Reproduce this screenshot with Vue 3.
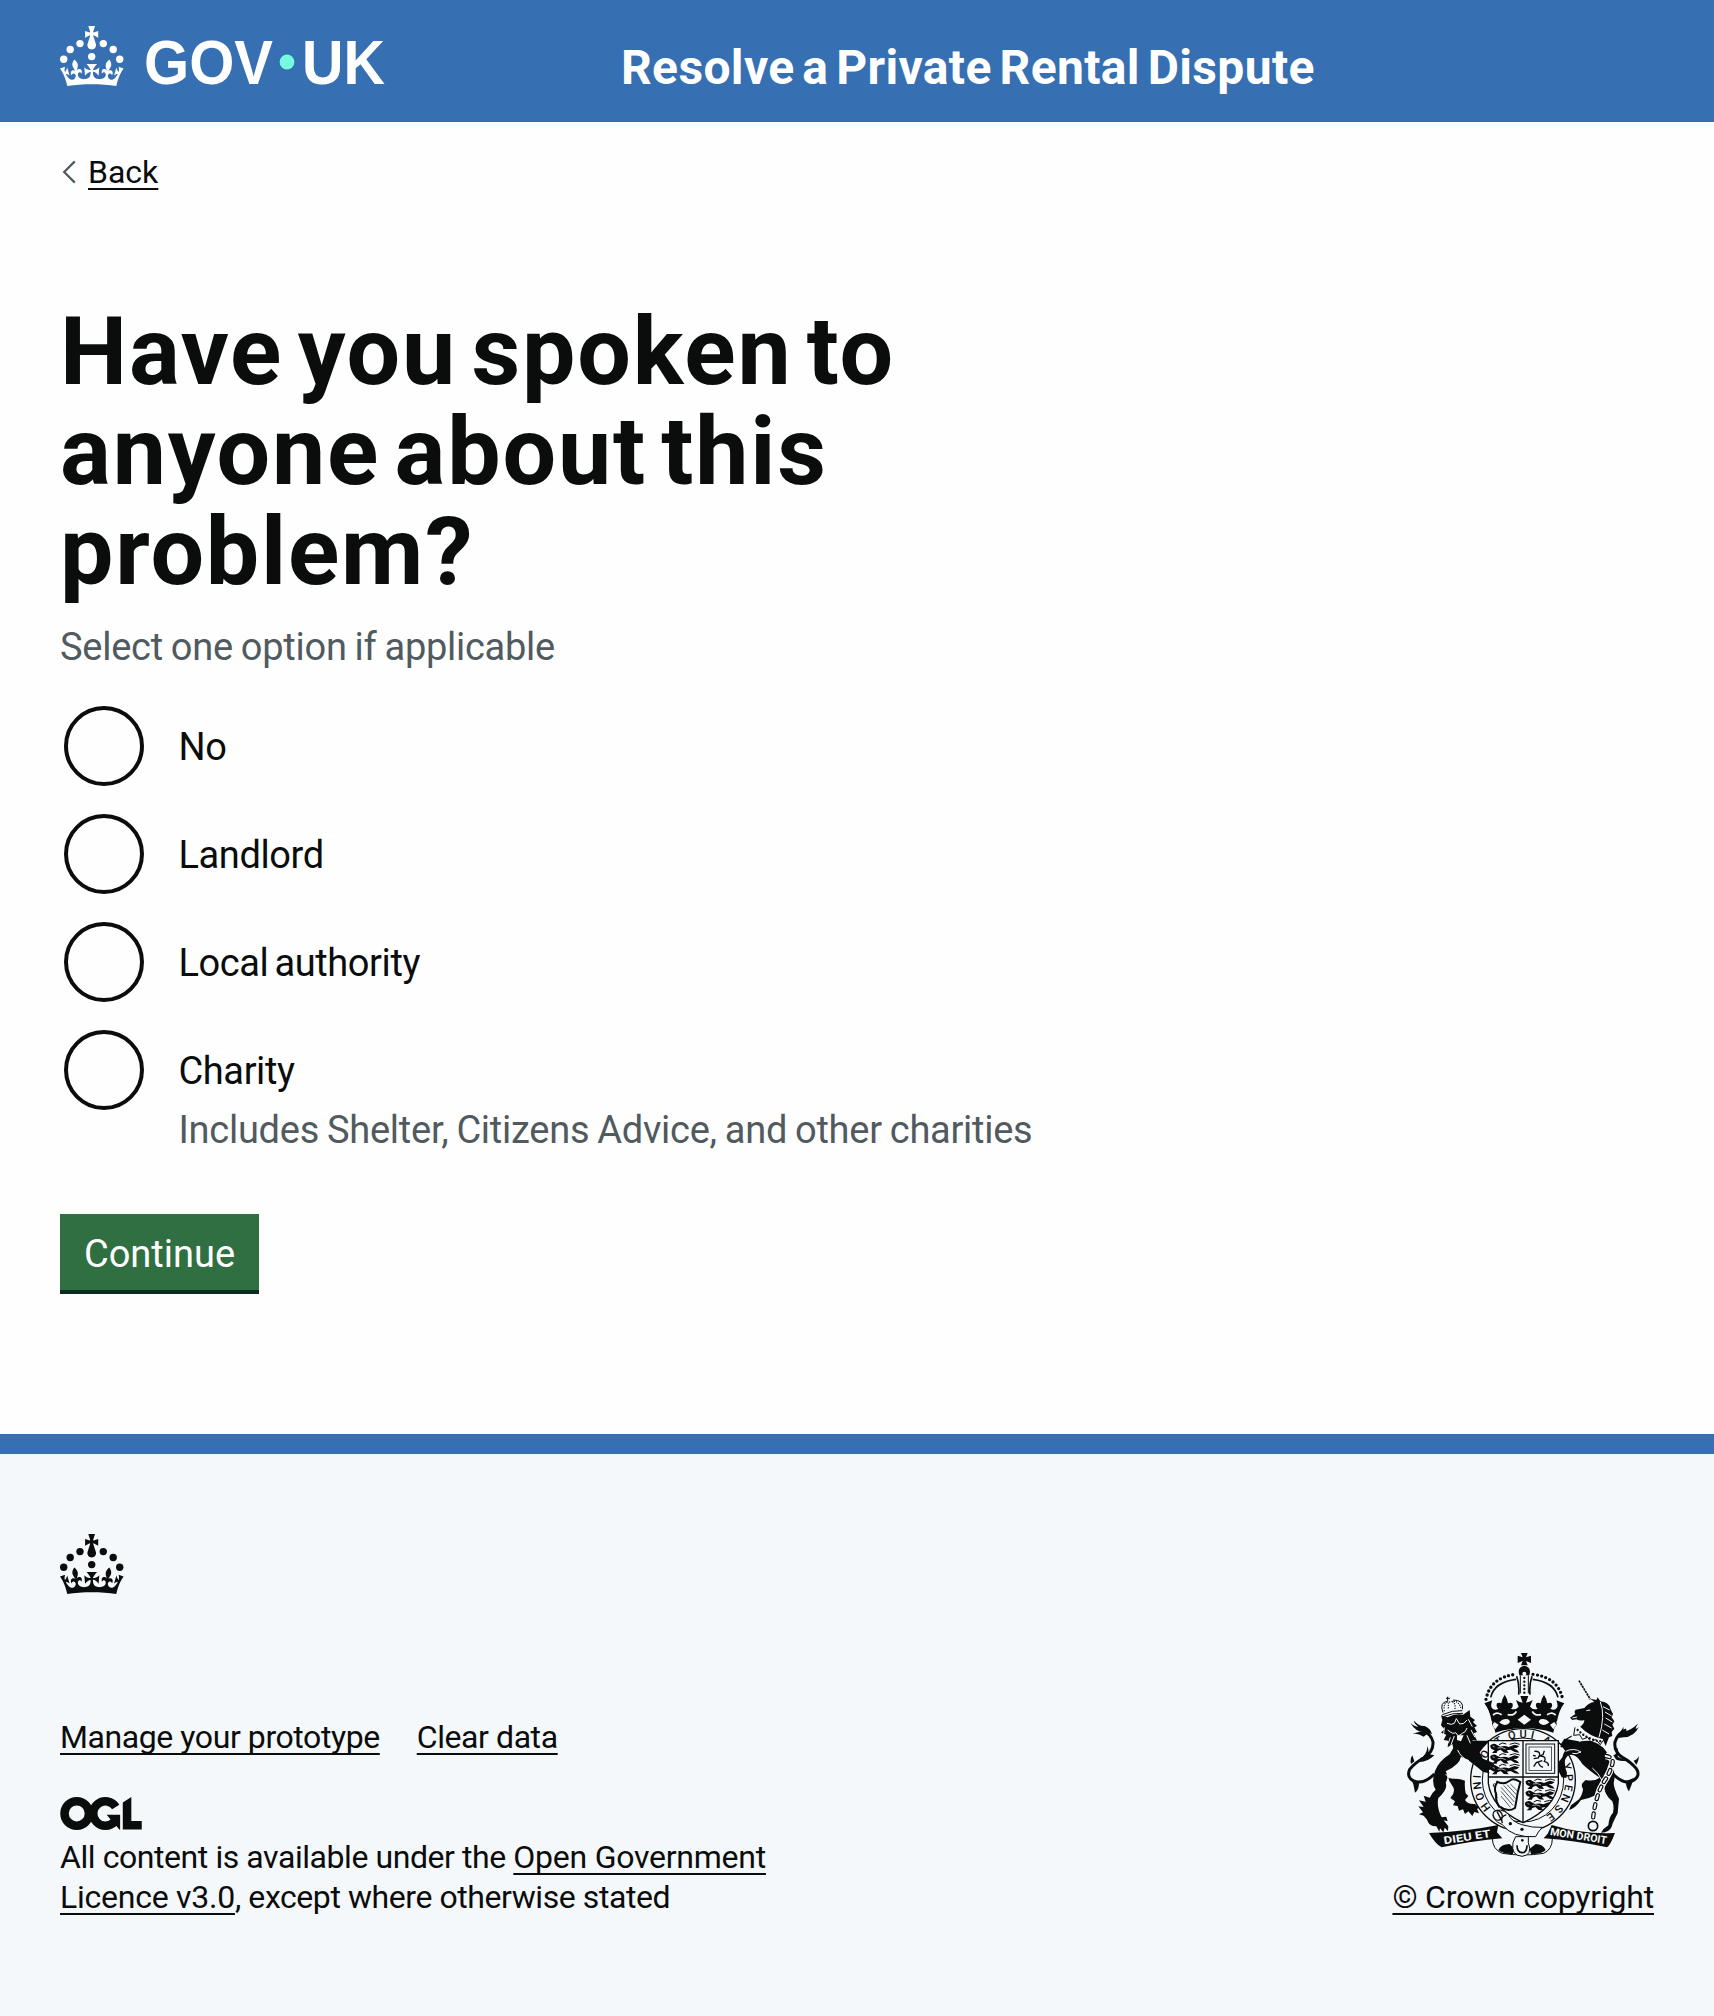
<script setup>
const options = [
  { id: 'no', label: 'No' },
  { id: 'landlord', label: 'Landlord' },
  { id: 'authority', label: 'Local authority' },
  {
    id: 'charity',
    label: 'Charity',
    hint: 'Includes Shelter, Citizens Advice, and other charities',
  },
]

const crownPath =
  'M33.1,9.8c.2-.1.3-.3.5-.5l4.6,2.4v-6.8l-4.6,1.5c-.1-.2-.3-.3-.5-.5l1.9-5.9h-6.7l1.9,5.9c-.2.1-.3.3-.5.5l-4.6-1.5v6.8l4.6-2.4c.1.2.3.3.5.5l-2.6,8c-.9,2.8,1.2,5.7,4.1,5.7h0c3,0,5.1-2.9,4.1-5.7l-2.6-8ZM37,37.9s-3.4,3.8-4.1,6.1c2.2,0,4.2-.5,6.4-2.8l-.7,8.5c-2-2.8-4.4-4.1-5.7-3.8.1,3.1.5,6.7,5.8,7.2,3.7.3,6.7-1.5,7-3.8.4-2.6-2-4.3-3.7-1.6-1.4-4.5,2.4-6.1,4.9-3.2-1.9-4.5-1.8-7.7,2.4-10.9,3,4,2.6,7.3-1.2,11.1,2.4-1.3,6.2,0,4,4.6-1.2-2.8-3.7-2.2-4.2.2-.3,1.7.7,3.7,3,4.2,1.9.3,4.7-.9,7-5.9-1.3,0-2.4.7-3.9,1.7l2.4-8c.6,2.3,1.4,3.7,2.2,4.5.6-1.6.5-2.8,0-5.3l5,1.8c-2.6,3.6-5.2,8.7-7.3,17.5-7.4-1.1-15.7-1.7-24.5-1.7h0c-8.8,0-17.1.6-24.5,1.7-2.1-8.9-4.7-13.9-7.3-17.5l5-1.8c-.5,2.5-.6,3.7,0,5.3.8-.8,1.6-2.3,2.2-4.5l2.4,8c-1.5-1-2.6-1.7-3.9-1.7,2.3,5,5.2,6.2,7,5.9,2.3-.4,3.3-2.4,3-4.2-.5-2.4-3-3.1-4.2-.2-2.2-4.6,1.6-6,4-4.6-3.7-3.7-4.2-7.1-1.2-11.1,4.2,3.2,4.3,6.4,2.4,10.9,2.5-2.8,6.3-1.3,4.9,3.2-1.8-2.7-4.1-1-3.7,1.6.3,2.3,3.3,4.1,7,3.8,5.4-.5,5.7-4.2,5.8-7.2-1.3-.2-3.7,1-5.7,3.8l-.7-8.5c2.2,2.3,4.2,2.7,6.4,2.8-.7-2.3-4.1-6.1-4.1-6.1h10.6,0Z'

const crownPearls = [
  [20, 17.6],
  [10.2, 23.5],
  [3.7, 33.2],
  [31.7, 30.6],
  [43.3, 17.6],
  [53.2, 23.5],
  [59.7, 33.2],
]

// Motto letters on the garter, as [letter, clockwise angle from the top]
const motto = [
  ['H', -126], ['O', -111], ['N', -97], ['I', -86],
  ['S', -67], ['O', -56],
  ['T', -32], ['Q', -14], ['U', 0], ['I', 12], ['A', 31],
  ['Y', 73], ['P', 87], ['E', 100], ['N', 113], ['S', 129], ['E', 143],
]

// Walking lions in the first and fourth quarters of the shield
const lions = [
  [332, 310], [332, 342], [332, 374],
  [438, 418], [438, 450], [436, 482],
]
</script>

<template>
  <div class="page">
    <header class="header">
      <a class="header-logo" aria-label="GOV.UK">
        <svg class="logotype" viewBox="0 0 324 60" width="324" height="60">
          <circle v-for="(p, i) in crownPearls" :key="i" :cx="p[0]" :cy="p[1]" r="3.7" />
          <path :d="crownPath" />
          <text x="84" y="57.6" textLength="129" lengthAdjust="spacingAndGlyphs">GOV</text>
          <circle class="logo-dot" cx="227" cy="36" r="7.4" />
          <text x="242" y="57.6" textLength="83" lengthAdjust="spacingAndGlyphs">UK</text>
        </svg>
      </a>
      <span class="service-name">Resolve a Private Rental Dispute</span>
    </header>

    <main class="main">
      <a class="back">
        <svg class="chevron" viewBox="0 0 16 24" width="16" height="24">
          <path d="M14.8 1.4 4.2 12l10.600 10.600" />
        </svg>
        <span class="link">Back</span>
      </a>

      <form class="question">
        <h1>Have you spoken to anyone about this problem?</h1>
        <p class="hint">Select one option if applicable</p>

        <div class="options">
          <div v-for="o in options" :key="o.id" class="option">
            <div class="option-row">
              <span class="radio" role="radio" aria-checked="false"></span>
              <span class="option-label">{{ o.label }}</span>
            </div>
            <div v-if="o.hint" class="hint option-hint">{{ o.hint }}</div>
          </div>
        </div>

        <button type="button" class="button">Continue</button>
      </form>
    </main>

    <footer class="footer">
      <svg class="footer-crown" viewBox="0 0 64 60" width="64" height="60">
        <circle v-for="(p, i) in crownPearls" :key="i" :cx="p[0]" :cy="p[1]" r="3.7" />
        <path :d="crownPath" />
      </svg>

      <div class="footer-meta">
        <div class="footer-info">
          <div class="footer-links">
            <a class="link">Manage your prototype</a>
            <a class="link">Clear data</a>
          </div>
          <svg class="ogl" viewBox="0 0 483.2 195.7" width="82" height="33" aria-label="OGL">
            <circle cx="97.8" cy="97.8" r="72.5" />
            <path d="M329 59A72.500 72.500 0 1 0 322 146" />
            <path class="solid" d="M355 106v88h-3l-53-60-24-28zM421.500 142.800V0l-50.700 32.300v161.100h112.400v-50.600z" />
          </svg>
          <p class="licence">
            All content is available under the
            <a class="link">Open Government Licence v3.0</a>, except where otherwise stated
          </p>
        </div>

        <a class="copyright">
          <svg class="arms" viewBox="84 39 696 612" width="232" height="204">
            <!-- royal crown -->
            <g>
              <path d="M426 39h20l-5 13 15-5v22l-15-6 5 13h-20l5-13-15 6V47l15 5z" />
              <path d="M419 96q0-17 17-19 17 2 17 19l-2 10h-30z" />
              <circle class="paper" cx="436" cy="101" r="6" />
              <path class="beads" d="M321 178Q334 112 410 103M462 103Q538 112 551 178" />
              <path class="line w5" d="M335 172Q346 126 411 118M461 118Q526 126 537 172" />
              <path class="line w5" d="M413 109Q422 135 419 164M459 109Q450 135 453 164" />
              <path class="line w3" d="M424 106v54M448 106v54" />
              <path class="beads small" d="M436 114v52" />
              <path d="M316 190L340 181Q334 196 338 203Q346 214 358 206Q350 200 354 190Q360 186 367 190Q370 174 377 164Q384 174 387 190Q394 186 400 190Q404 200 396 206Q408 212 419 200L411 180Q420 186 431 188L424 168H448L441 188Q452 186 461 180L453 200Q464 212 476 206Q468 200 472 190Q478 186 485 190Q488 174 495 164Q502 174 505 190Q512 186 518 190Q522 200 514 206Q526 214 534 203Q538 196 532 181L556 190Q540 210 534 244Q436 218 338 244Q332 210 316 190Z" />
              <path d="M338 236Q436 212 534 236L532 248Q536 254 526 264L523 278Q436 250 349 278L346 264Q336 254 340 248Z" />
              <path class="paper" d="M346 246l13 8-10 14-9-13zM361 247q12-14 26-9 12 7-1 15-14 6-25-6zM436 224l20 15-20 15-20-15zM485 238q14-5 26 9-11 12-25 6-13-8-1-15zM526 246l-13 8 10 14 9-13z" />
              <path class="paper-line w5" d="M342 226Q350 214 368 224M386 224Q406 228 412 214M460 214Q466 228 486 224M504 224Q522 214 530 226" />
            </g>

            <!-- garter -->
            <g>
              <path d="M262 302h80l-52 62-38-28zM556 296l44 8-26 40-36-20z" />
              <ellipse class="band" cx="432" cy="420" rx="157" ry="154" />
              <ellipse class="line w3" cx="432" cy="420" rx="122" ry="126" />
              <text
                v-for="(m, i) in motto"
                :key="i"
                class="motto"
                :transform="`translate(432 420) rotate(${m[1]}) translate(0 -127)`"
              >{{ m[0] }}</text>
            </g>

            <!-- shield -->
            <g>
              <clipPath id="shield-shape">
                <path d="M328 302h210v128q-10 74-106 118-94-44-104-118z" />
              </clipPath>
              <path class="band" d="M328 302h210v128q-10 74-106 118-94-44-104-118z" />
              <path class="line w4" d="M432 302v246M328 411h210" />
              <g clip-path="url(#shield-shape)">
                <g v-for="(l, i) in lions" :key="i" :transform="`translate(${l[0]} ${l[1]})`">
                  <path d="M2 6q10-9 20-1l10 5q14-4 25 1l18-7 14 4-8 6-10 1 12 6 6 7-14-2-12-7-12 2 6 8-14-1-10-9-10 4-2 6H7l8-8Q0 18 2 6z" />
                  <path class="line w3" d="M60 3q16-8 30 0M28 4l10-5 12 3" />
                  <path class="paper-line w2" d="M9 8l6 3M24 14q14-4 24 3" />
                </g>
              </g>
              <rect class="line w3" x="441" y="312" width="86" height="88" />
              <rect class="line w2" x="450" y="321" width="68" height="70" />
              <path class="line w4" d="M466 334q16-2 16 10l-4 10-14 2M478 350l14-6 4-12M486 348q18 2 10 16 14 4 12 14M490 362l-18 6-8 12M478 366q2 12 14 16M462 346l8 2" />
              <path class="line w6" d="M356 424q-14 20-4 40-4 20 10 38M352 424q22 12 40-2 12-10 32 4l-8 32q-4 28-8 46-22 14-44-4" />
              <path class="line w2" d="M366 442l40 44M374 436l36 40M384 434l28 30M366 454l36 42M366 468l28 34M394 432l20 20" />
              <path class="line w3" d="M346 430q-8 10 4 12-8 10 2 16-8 10 4 14" />
            </g>

            <!-- lion -->
            <g>
              <path class="line w9" d="M166 402q-34 34-64 20-20-12-10-34 16-20 42-34 30-18 28-48-6-26-34-34" />
              <path d="M134 276q-24 0-40-28 12 12 24 12-14-10-13-18 16 18 32 16 18 8 22 24zM100 282q16-4 34 8l10-8-18-8zM124 354q18-6 22-36 4 18 2 24l18 4q-20 20-44 20zM96 372q-4-14 4-26l6 18zM96 414q10 22 12 44 12-8 12-30z" />
              <path d="M232 308q26-14 46 6 26 20 34 42l30 12 4 8-12 4 8 8-14 2 4 10-20-4-14-12-28-22-24-12q-4 24-46 44 10 16 0 34 8 20-22 46-6 26 10 58l14-2 4 14-12-3 14 18-1 14-10-10-4 14-10-12-2 10-9-16q-22 0-28-20l-10-12-14-4 12-6-14-18 16 2-14-20 20 4-6-18 18 6q6-14 18-24-14-20-2-56 12-30 44-50z" />
              <path d="M202 408q8 10 24 8 20 0 32 6-2 18 2 38l8 8-10 12q8 14 30 12l14 12-8 2 6 14-14-4-6 12-12-14-10 8-6-14-12 4-4-14-14-2 6-12-14-10q20-20 4-40z" />
              <path class="paper-line w3" d="M200 402q10 8 8 20l6 24M236 330q10 24 34 32" />
              <path d="M190 240l-4-14 20 6q22-12 46-8l20-14 2 20 14 10-6 6 12 12-8 4 8 14-10 4 10 22-14-2 10 20-16-6-4 14-12-12-14 8-6-10-14 14-4-16-14 10 2-20-14-2 8-16-16-6 10-10-10-12z" />
              <path class="paper-line w3" d="M204 250q14 6 22 0l6-14 10 16q14 2 22-12M206 270q16 14 24 8l8 10 12-8q10-2 14-16M214 292l-6 18M226 288l-10 26M276 270l12 22M196 262l-2 20M264 286l10 24M268 238l12 22" />
              <path class="paper" d="M234 286h20l-8 18-12-4z" />
              <path class="line w3" d="M190 224q30-14 60-12M192 230q28-12 60-10M192 218q-12-32 14-34M250 208q6-28-28-28M206 184v-14M201 175h12" />
              <path class="beads tiny" d="M196 212q-4-24 12-26v22M212 186q28-8 34 20M222 186q8 6 6 20" />
            </g>

            <!-- unicorn -->
            <g>
              <path class="horn" d="M600 122l34 56" />
              <path class="line w9" d="M702 402q34 34 60 20 24-14 10-36-16-20-42-34-26-18-22-46 8-26 34-36" />
              <path d="M730 276q24-2 48-26-8 12-8 16 6 0 10-6-14 30-46 32l-16 2q2-14 16-34-2 12 2 16zM716 350q4-18-2-28l-4 20-12 8q20 16 44 12zM764 362q10-2 16-14-2 18-8 26zM764 414q-6 22-14 40-8-8-10-30z" />
              <path d="M573 233L589 222Q584 214 590 209L616 204Q630 188 646 186L634 176L652 180L656 172L664 184Q690 186 694 206L702 222L698 232L706 244L700 254L706 266L698 276L700 288L690 292L680 318L672 300Q636 296 602 262Q616 252 616 240Q604 244 592 238L580 240Z" />
              <path class="paper-line w3" d="M622 212l12-2M664 186Q680 226 660 292M672 200l20 10M678 216l20 12M680 234l20 12M676 252l22 12M670 270l20 12M580 234l14-3" />
              <path class="line w3" d="M588 262l-4 24 18-2 8 14 16-6 10 14 14-8 14 16 16-24" />
              <path class="paper-line w5" d="M598 258Q630 292 672 300" />
              <path class="beads small" d="M596 270Q626 300 668 304" />
              <path d="M550 352Q556 322 590 308Q630 294 658 312Q688 330 698 372Q712 400 704 428Q704 444 720 476L716 520Q700 550 698 560Q692 576 666 578Q672 566 688 556Q690 530 702 518Q706 500 700 484Q676 464 676 440L672 420Q630 392 610 372Q596 350 584 346Q566 340 558 360Q556 380 564 398L562 414L548 412L540 396Q534 370 550 352Z" />
              <path d="M620 420Q646 426 664 412L676 440Q664 468 650 466Q630 476 606 480Q590 504 570 510L576 496L600 478Q612 460 612 446Q606 440 610 430Z" />
              <path class="paper-line w3" d="M560 334Q584 322 606 336Q590 344 580 340M640 384Q660 400 668 420" />
              <path class="line w4" d="M546 322Q554 300 578 288M560 296l20 18M556 310l16 4" />
              <path class="chain-back" d="M680 348q26 4 20 24-6 22-18 42-20 30-28 60-10 34-12 66" />
              <path class="chain" d="M680 348q26 4 20 24-6 22-18 42-20 30-28 60-10 34-12 66" />
              <path class="chain-gap" d="M680 348q26 4 20 24-6 22-18 42-20 30-28 60-10 34-12 66" />
              <circle class="line w5" cx="642" cy="558" r="14" />
            </g>

            <!-- belt and motto scrolls -->
            <g>
              <path d="M150 579q110-4 208-24l-4 22 16 18q-90 8-182 27-18-8-38-43zM708 579q-100 4-190-24l-12 26-12 14q90 6 190 27 10-6 24-43z" />
              <path class="line w3" d="M340 594q0 34 30 46 62 10 124 0 26-12 26-44" />
              <path d="M358 630q8-18 34-18l14 14-4 16q-26 2-44-12zM500 630q-8-18-30-18l-18 14 4 16q30 2 44-12z" />
              <path class="band thin" d="M344 516q20-14 44 6 8 22 40 32 34 10 62 8-14 14-20 28-70 4-100-36-34-14-26-38z" />
              <ellipse class="band" cx="356" cy="526" rx="13" ry="15" transform="rotate(-30 356 526)" />
              <path class="line w4" d="M354 514l14 28M382 524q-20 6-12 26" />
              <circle cx="394" cy="551" r="5" />
              <circle cx="429" cy="568" r="5" />
              <path class="band thin" d="M410 590h38v18q14 38-19 41-34-3-27-41z" />
              <path class="line w5" d="M414 616q0 22 15 22t15-22" />
              <circle cx="430" cy="601" r="4" />
              <text class="scroll" x="196" y="613" textLength="142" lengthAdjust="spacingAndGlyphs" transform="rotate(-9 196 613)">DIEU ET</text>
              <text class="scroll" x="512" y="585" textLength="172" lengthAdjust="spacingAndGlyphs" transform="rotate(9 512 585)">MON DROIT</text>
            </g>
          </svg>
          <span class="link">© Crown copyright</span>
        </a>
      </div>
    </footer>
  </div>
</template>

<style>
body {
  margin: 0;
}
</style>

<style scoped>
.page {
  display: flex;
  flex-direction: column;
  min-height: 2016px;
  box-sizing: border-box;
  background: #fefefe;
  color: #0b0c0c;
  font-family: Roboto, "Noto Sans", sans-serif;
  font-size: 38px;
  line-height: 50px;
}

.header {
  display: flex;
  align-items: flex-start;
  height: 122px;
  padding: 0 60px;
  box-sizing: border-box;
  background: #366fb2;
  color: #fff;
}

.header-logo {
  width: 561px;
  padding-top: 26px;
}

.logotype {
  display: block;
  overflow: visible;
  fill: #fff;
  font-family: "Liberation Sans", Arial, sans-serif;
  font-size: 63.5px;
  font-weight: 700;
}

.logo-dot {
  fill: #77fbe0;
}

.service-name {
  padding-top: 38px;
  font-size: 48px;
  font-weight: 700;
  line-height: 60px;
  letter-spacing: 0.36px;
  word-spacing: -4.5px;
}

.main {
  display: flex;
  flex-direction: column;
  align-items: flex-start;
  flex: 1;
  padding: 30px 60px 0;
}

.back {
  display: flex;
  align-items: center;
  gap: 12px;
  font-size: 32px;
  line-height: 40px;
}

.chevron {
  fill: none;
  stroke: #505a5f;
  stroke-width: 2.2;
}

.link {
  text-decoration: underline;
  text-decoration-thickness: 2px;
  text-decoration-skip-ink: none;
  text-underline-offset: 5px;
}

.question {
  width: 1056px;
  margin-top: 110px;
}

h1 {
  width: 900px;
  margin: 0;
  font-size: 95px;
  font-weight: 700;
  line-height: 100px;
  letter-spacing: 1.8px;
  word-spacing: -11px;
}

.hint {
  margin: 20px 0 0;
  color: #505a5f;
  letter-spacing: -0.26px;
  word-spacing: -1.2px;
}

.options {
  display: flex;
  flex-direction: column;
  gap: 20px;
  margin-top: 30px;
}

.option-row {
  display: flex;
  align-items: center;
  gap: 34.5px;
  height: 88px;
  padding-left: 4px;
}

.radio {
  width: 80px;
  height: 80px;
  box-sizing: border-box;
  border: 4px solid #0b0c0c;
  border-radius: 50%;
}

.option-label {
  padding-top: 1px;
  letter-spacing: -0.4px;
  word-spacing: -3px;
}

.option-hint {
  margin: -9px 0 0 118.5px;
  white-space: nowrap;
}

.button {
  display: block;
  width: 199px;
  height: 76px;
  margin-top: 59px;
  padding: 3px 0 0;
  border: 0;
  background: #2f6f42;
  box-shadow: 0 4px 0 #0c2d1f;
  color: #fff;
  font: inherit;
  text-align: center;
}

.footer {
  height: 582px;
  box-sizing: border-box;
  padding: 80px 60px 0;
  border-top: 20px solid #366fb2;
  background: #f4f8fb;
  font-size: 32px;
  line-height: 40px;
}

.footer-crown {
  display: block;
  fill: #0b0c0c;
}

.footer-meta {
  display: flex;
  align-items: flex-end;
  justify-content: space-between;
  margin-top: 59px;
}

.footer-links {
  display: flex;
  gap: 37px;
  letter-spacing: -0.42px;
}

.ogl {
  display: block;
  margin-top: 40px;
  overflow: visible;
  fill: none;
  stroke: #0b0c0c;
  stroke-width: 50.7;
}

.ogl .solid {
  fill: #0b0c0c;
  stroke: none;
}

.licence {
  width: 730px;
  margin: 7px 0 0;
  letter-spacing: -0.43px;
}

.licence .link {
  letter-spacing: -0.25px;
}

.copyright {
  display: flex;
  flex-direction: column;
  align-items: center;
  gap: 20px;
  letter-spacing: -0.2px;
}

.arms {
  display: block;
  overflow: visible;
  fill: #0b0c0c;
}

.arms .paper {
  fill: #f4f8fb;
}

.arms .line,
.arms .beads,
.arms .horn,
.arms .chain {
  fill: none;
  stroke: #0b0c0c;
}

.arms .band {
  fill: #f4f8fb;
  stroke: #0b0c0c;
  stroke-width: 4;
}

.arms .thin {
  stroke-width: 3;
}

.arms .paper-line,
.arms .chain-back,
.arms .chain-gap {
  fill: none;
  stroke: #f4f8fb;
}

.arms .beads {
  stroke-width: 10;
  stroke-linecap: round;
  stroke-dasharray: 0 13;
}

.arms .beads.small {
  stroke-width: 7;
  stroke-dasharray: 0 11;
}

.arms .beads.tiny {
  stroke-width: 4;
  stroke-dasharray: 0 7;
}

.arms .horn {
  stroke-width: 5;
  stroke-dasharray: 7 2;
}

.arms .chain-back {
  stroke-width: 20;
}

.arms .chain {
  stroke-width: 13;
  stroke-linecap: round;
  stroke-dasharray: 12 16;
}

.arms .chain-gap {
  stroke-width: 6;
  stroke-linecap: round;
  stroke-dasharray: 12 16;
}

.arms .w2 { stroke-width: 2; }
.arms .w3 { stroke-width: 3; }
.arms .w4 { stroke-width: 4; }
.arms .w5 { stroke-width: 5; }
.arms .w6 { stroke-width: 6; }
.arms .w9 { stroke-width: 9; }

.motto {
  font-size: 33px;
  font-weight: 500;
  letter-spacing: 0;
  text-anchor: middle;
}

.scroll {
  fill: #f4f8fb;
  font-size: 32px;
  font-weight: 700;
  letter-spacing: 0;
}
</style>
